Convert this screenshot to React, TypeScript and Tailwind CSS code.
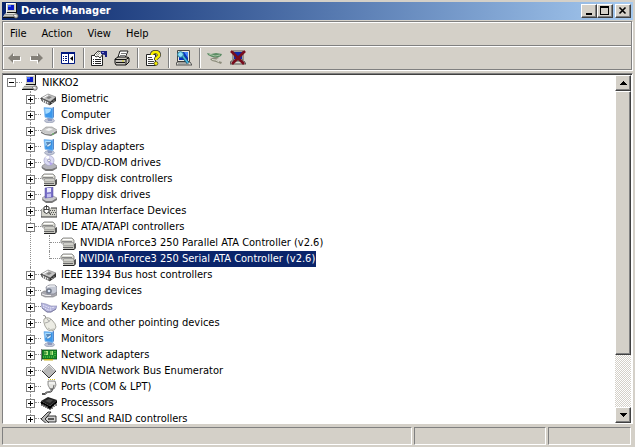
import type { ReactNode } from 'react';
import clsx from 'clsx';

interface IconProps {
  className?: string;
}

function Glyph({ className, children }: IconProps & { children: ReactNode }) {
  return (
    <svg viewBox="0 0 16 16" aria-hidden="true" className={clsx('size-4 shrink-0', className)}>
      {children}
    </svg>
  );
}

function PcIcon({ className }: IconProps) {
  return (
    <Glyph className={className}>
      <path d="M3 0h10v10H3z" fill="#d8d8d0" />
      <path d="M3 0h9v1H4v8H3z" fill="#fff" />
      <path d="M4 1h8v7H4z" fill="#c8c8c0" />
      <path d="M5 2h6v5H5z" fill="#0818c8" />
      <path d="M5 2h3v2H5z" fill="#4068ff" />
      <path d="M13 0h1v10H4V9h9z" fill="#111" />
      <path d="M3 10h10l1 2H1z" fill="#e8e8e0" />
      <path d="M1 12h12v2H0z" fill="#c8c8c0" />
      <path d="M2 11.500h9M1 13.500h9" stroke="#888" strokeWidth=".8" />
      <path d="M0 14h13v1H0z" fill="#111" />
      <circle cx="13" cy="13" r="2.200" fill="#d4d4d0" stroke="#444" strokeWidth=".8" />
      <path d="M11 12l2 1" stroke="#fff" />
    </Glyph>
  );
}

function ChipBoxIcon() {
  return (
    <Glyph>
      <path d="M0 7l7-4 8 3-6 5z" fill="#c4c4c4" stroke="#777" strokeWidth=".6" />
      <path d="M0 7l9 4v3L1 10z" fill="#888" stroke="#222" strokeWidth=".6" />
      <path d="M9 11l6-5v4l-6 4z" fill="#333" />
      <path d="M5 7l3-2 3 1-3 2z" fill="#808080" />
      <path d="M2 7l5-3" stroke="#fff" />
      <path d="M2.500 9v2M4.500 10v2M6.500 11v1.500M11 11v1M13 9.500v1" stroke="#eee" strokeWidth=".9" />
    </Glyph>
  );
}

function ScreenIcon({ tilted = false }: { tilted?: boolean }) {
  return (
    <Glyph>
      <ellipse cx="8.500" cy="13.700" rx="5" ry="2" fill="#c4c8d8" stroke="#8c94ac" strokeWidth=".6" />
      <path d="M6 10l5 1v3H7z" fill="#8c98bc" />
      <path d="M11 1l2-1v10l-2 2z" fill="#3468b8" />
      <path d="M3 0.500l9 .7v10.300l-8-1.200z" fill="#3c98ec" stroke="#8cbcec" strokeWidth=".8" />
      <path d="M4 1.500l6 .5q0 4-5.500 5z" fill="#a8dcff" />
      {tilted && <path d="M5 3h5v3H6z" fill="#5c88b8" />}
      {tilted && <path d="M5 7l5-3.500V6L7 8z" fill="#dcf0ff" stroke="#2868a8" strokeWidth=".5" />}
    </Glyph>
  );
}

function DiskIcon() {
  return (
    <Glyph>
      <path d="M0 8l5-4h6l5 3-5 4H4z" fill="#c8c8c8" stroke="#8a8a8a" strokeWidth=".6" />
      <path d="M0 8l4 2 6 1 6-4v3l-6 3-6-1-4-2z" fill="#777" />
      <path d="M0 8l4 2.500 6 .5 6-4" stroke="#eee" strokeWidth=".8" fill="none" />
      <path d="M4 7l4-2 4 1-4 2z" fill="#f4f4f4" />
      <path d="M11 11h2" stroke="#6c6" />
    </Glyph>
  );
}

function CdIcon() {
  return (
    <Glyph>
      <path d="M1 11l4-3h7l4 3v2l-5 3H5l-4-3z" fill="#b4b4bc" stroke="#777" strokeWidth=".6" />
      <path d="M1 12l4 2h6l5-2v1l-5 3H5l-4-3z" fill="#777" />
      <circle cx="8" cy="5.500" r="5" fill="#dcdcf4" stroke="#a4a4c8" strokeWidth=".7" />
      <path d="M8 5L4 2a5 5 0 014-1z" fill="#fff" />
      <path d="M8 6l4 3-3 1z" fill="#b4a4ec" />
      <circle cx="8" cy="5.500" r="1.400" fill="#fff" stroke="#7c7ca4" strokeWidth=".7" />
    </Glyph>
  );
}

function ControllerIcon() {
  return (
    <Glyph>
      <path d="M3 3h9l2 2v3H3L1 8V5z" fill="#dcdcd4" stroke="#777" strokeWidth=".8" />
      <path d="M3 4.500h9" stroke="#fff" />
      <path d="M2 6.500h10" stroke="#888" />
      <path d="M4 8h9l3 1v4l-2 2H5l-2-2V9z" fill="#c4c4bc" />
      <path d="M4 8h9l1 1v1H3V9z" fill="#f4f4ec" stroke="#777" strokeWidth=".6" />
      <path d="M14 9l2-1v5l-2 2z" fill="#555" />
      <path d="M3 12.500h10" stroke="#666" />
      <path d="M3 14.500h11" stroke="#222" />
    </Glyph>
  );
}

function FloppyIcon() {
  return (
    <Glyph>
      <path d="M1 11l3-2h8l4 2-5 4H5z" fill="#c8c8cc" stroke="#888" strokeWidth=".6" />
      <path d="M1 12l4 2h6l5-3v2l-5 3H5l-4-3z" fill="#777" />
      <path d="M4 1l8-1v10l-8 1z" fill="#7870c8" stroke="#5048a0" strokeWidth=".5" />
      <path d="M6 1h4v4l-4 .5z" fill="#e8e8fc" />
      <path d="M6 7l4-.5V10l-4 .5z" fill="#c4c0f0" />
    </Glyph>
  );
}

function HidIcon() {
  return (
    <Glyph>
      <path d="M1 5h14v9H1z" fill="#d4d4cc" />
      <path d="M0 6v8h16V5M10 5h6" fill="none" stroke="#333" />
      <path d="M9 7.500h6M10 9.500h5M9 11.500h6" stroke="#555" strokeDasharray="1 1" />
      <path d="M3 4q2.500-1.500 5 0v5q-2.500 3-5 0z" fill="#fff" stroke="#222" strokeWidth=".9" />
      <path d="M5.500 2v4M3 6.500h5" stroke="#222" strokeWidth=".8" />
      <path d="M8 9q1 3 2 2" stroke="#444" fill="none" />
    </Glyph>
  );
}

function CameraIcon() {
  return (
    <Glyph>
      <path d="M0 10l3-2h9l4 1v3l-4 2H4l-4-2z" fill="#a8a8b0" stroke="#777" strokeWidth=".6" />
      <path d="M5 4l3-2h6l2 2v5l-3 2H6z" fill="#c4c8d4" stroke="#7c7c88" strokeWidth=".7" />
      <path d="M6 4l3-1h5" stroke="#fff" fill="none" />
      <circle cx="8" cy="8" r="2.800" fill="#707888" />
      <circle cx="8" cy="8" r="1.300" fill="#dce8fc" />
      <path d="M1 11l4 1.500h5" stroke="#eee" fill="none" />
    </Glyph>
  );
}

function KeyboardIcon() {
  return (
    <Glyph>
      <path d="M0 4l5 1 5 2h6l-1 3-5 3H6L1 9z" fill="#b4b4dc" stroke="#8c8cb4" strokeWidth=".6" />
      <path d="M2 6l7 3 5-1M2 8l5 3h4" stroke="#ececfc" strokeDasharray="1.500 1" fill="none" />
      <path d="M1 9l5 4h4l5-3" stroke="#8080a4" fill="none" />
    </Glyph>
  );
}

function MouseIcon() {
  return (
    <Glyph>
      <path d="M2 0q3 0 3 4" stroke="#888" fill="none" />
      <path d="M3 4q4-3 8 1 4 4 4 7-1 4-5 4-4 0-6-5T3 4z" fill="#ecece4" stroke="#94948c" strokeWidth=".8" />
      <path d="M4 8q4 0 6-4M6 3.500l2 3" stroke="#999" strokeWidth=".8" fill="none" />
      <path d="M7 13q2 2.500 6 1" stroke="#bcbcb4" fill="none" />
    </Glyph>
  );
}

function NetworkIcon() {
  return (
    <Glyph>
      <path d="M1 3h15v9H1z" fill="#188828" stroke="#0c4c14" strokeWidth=".8" />
      <path d="M3 4h4v4H3zM9 4h3v4H9z" fill="#b4ec84" />
      <path d="M4 4v4M6 6H3M10 4v4" stroke="#0c6c18" strokeWidth=".8" />
      <path d="M2 10h12M14 4v5" stroke="#70d850" strokeDasharray="1 1" />
      <path d="M3 12h9v1.500H3z" fill="#c8b428" />
      <path d="M0 2h1v12H0z" fill="#777" />
    </Glyph>
  );
}

function DiamondIcon() {
  return (
    <Glyph>
      <path d="M8 1l7 7-7 7-7-7z" fill="#b8b8b8" />
      <path d="M1 8l7-7 7 7" fill="none" stroke="#999" strokeWidth=".8" />
      <path d="M2 8l6-6 5 5" fill="none" stroke="#e4e4e4" />
      <path d="M1 8l7 7 7-7" fill="none" stroke="#333" />
    </Glyph>
  );
}

function PortIcon() {
  return (
    <Glyph>
      <path d="M7 2h7l1 4-2 4H9L7 6z" fill="#e4e4e0" stroke="#777" strokeWidth=".8" />
      <path d="M7 .5h7" stroke="#d4c428" strokeDasharray="1 1" />
      <path d="M8 4h6" stroke="#fff" />
      <path d="M13 6l-1 4H9" fill="none" stroke="#666" />
      <path d="M11 10q0 3-3 3t-4 2H1" fill="none" stroke="#222" strokeWidth="1.600" />
      <path d="M11 10q0 3-3 3t-4 2" fill="none" stroke="#ccc" strokeWidth=".6" />
    </Glyph>
  );
}

function CpuIcon() {
  return (
    <Glyph>
      <path d="M0 6l7-4 9 3-7 6z" fill="#222" />
      <path d="M0 6l9 5 7-6v3l-7 6-9-5z" fill="#000" />
      <path d="M4 6l4-2 4 1-3 3z" fill="#484848" />
      <path d="M1 9v2M3 10v2M5 11v2M7 12v2M9 13v2M11 12v2M13 11v1M15 9v2" stroke="#000" />
      <path d="M2 9v2M4 10v2M6 11v2M12 11v2M14 9v2" stroke="#bbb" strokeWidth=".6" />
    </Glyph>
  );
}

function ScsiIcon() {
  return (
    <Glyph>
      <path d="M0 8l7-7h3L5 7l1 3 4 4H7z" fill="#b8b8b8" stroke="#222" strokeWidth=".9" />
      <path d="M4 8l3-3h8v6H7z" fill="#d0d0d0" stroke="#222" strokeWidth=".9" />
      <path d="M7 8h6" stroke="#222" strokeWidth="1.400" />
    </Glyph>
  );
}

function ArrowIcon({ className }: IconProps) {
  return (
    <Glyph className={className}>
      <path d="M3 9l5-5v3h7v4H8v3z" fill="#fff" />
      <path d="M2 8l5-5v3h7v4H7v3z" fill="#848078" />
    </Glyph>
  );
}

function PaneIcon() {
  return (
    <Glyph>
      <path d="M1.500 2.500h13v11h-13z" fill="#fff" stroke="#001880" />
      <path d="M1 2h14v2H1z" fill="#001880" />
      <path d="M8.500 3v10" stroke="#001880" />
      <path d="M3 6.500h1M5 6.500h2M3 8.500h1M5 8.500h2M3 10.500h1M5 10.500h2" stroke="#001880" />
      <path d="M13 6v5l-3-2.500z" fill="#000" />
    </Glyph>
  );
}

function PropertiesIcon() {
  return (
    <Glyph>
      <path d="M.5 5.500h11v10H.5z" fill="#fff" stroke="#222" />
      <path d="M2 9.500h1M4 9.500h6M2 11.500h1M4 11.500h6M2 13.500h1M4 13.500h6" stroke="#222" />
      <path d="M3 5l4-4 3 1 2 2-3 4-2-2-2 1z" fill="#f4f4ec" stroke="#222" strokeWidth=".9" />
      <path d="M5 5l3-3M7 5l2-2" stroke="#777" strokeWidth=".7" />
      <path d="M10 1h6v6h-2V5l-4-1z" fill="#182080" />
      <path d="M11 2h2v1h-2z" fill="#8c8ce0" />
    </Glyph>
  );
}

function PrintIcon() {
  return (
    <Glyph>
      <path d="M4 7l2-6h8l-3 7z" fill="#fff" stroke="#222" />
      <path d="M7 3.500h5M6 5.500h5" stroke="#555" strokeWidth=".8" />
      <path d="M1 9l3-2h9l2 1v4l-3 3H2l-1-2z" fill="#c8c4bc" stroke="#111" />
      <path d="M1 9.500h11l3-2M12 10v5" stroke="#111" fill="none" />
      <path d="M2 12.500h9" stroke="#111" />
      <path d="M8 11h2" stroke="#dcd818" />
    </Glyph>
  );
}

function HelpIcon() {
  return (
    <Glyph>
      <path d="M1.500 4.500h9v11h-9z" fill="#fff" stroke="#222" />
      <path d="M3 7.500h4M3 9.500h5M3 11.500h6M3 13.500h6" stroke="#444" />
      <path d="M7 5q0-3 3.500-3T14 5q0 1.500-1.600 2.300T11 10" fill="none" stroke="#333" strokeWidth="4" />
      <path d="M7 5q0-3 3.500-3T14 5q0 1.500-1.600 2.300T11 10" fill="none" stroke="#f8f000" strokeWidth="2.600" />
      <circle cx="11" cy="13.500" r="1.900" fill="#f8f000" stroke="#333" strokeWidth=".7" />
    </Glyph>
  );
}

function ScanIcon() {
  return (
    <Glyph>
      <path d="M1.500.500h12v11h-12z" fill="#e8e8e0" stroke="#444" />
      <path d="M3 2h9v8H3z" fill="#0830c0" />
      <path d="M8 2h4v6z" fill="#4c8cf8" />
      <path d="M1 12h13l2 3H0z" fill="#e4e4dc" stroke="#333" strokeWidth=".8" />
      <path d="M2 14h11" stroke="#777" />
      <path d="M6 5l6 8" stroke="#185878" strokeWidth="3" />
      <path d="M6 5l6 8" stroke="#48b8e0" strokeWidth="1.600" />
      <circle cx="4.500" cy="4.500" r="2.800" fill="#90e0f8" stroke="#2880a0" />
    </Glyph>
  );
}

function DisableIcon() {
  return (
    <Glyph>
      <path d="M0 3l4 1 5-1 6 1-1 2-4 2-5-1-4-2z" fill="#5c8c64" />
      <path d="M2 4l6 2 5-1" stroke="#a4c4a4" fill="none" />
      <path d="M8 7l-5 2 2 2 4 1 5 2 1-2-4-1-2-2 3-1z" fill="#8c8c7c" />
      <path d="M5 9.500l4 .5 3 2" stroke="#dcdcd0" fill="none" />
    </Glyph>
  );
}

function UninstallIcon() {
  return (
    <Glyph>
      <path d="M3 1h10v9H3z" fill="#e0e0d8" stroke="#333" strokeWidth=".8" />
      <path d="M4 2h8v7H4z" fill="#1028a8" />
      <path d="M1 11h13l2 3H0z" fill="#d8d8d0" stroke="#333" strokeWidth=".8" />
      <path d="M1 1l13 13M15 1L2 14" stroke="#780c1c" strokeWidth="2.600" />
    </Glyph>
  );
}

interface Device {
  name: string;
  icon: ReactNode;
  children?: string[];
}

const devices: Device[] = [
  { name: 'Biometric', icon: <ChipBoxIcon /> },
  { name: 'Computer', icon: <ScreenIcon /> },
  { name: 'Disk drives', icon: <DiskIcon /> },
  { name: 'Display adapters', icon: <ScreenIcon tilted /> },
  { name: 'DVD/CD-ROM drives', icon: <CdIcon /> },
  { name: 'Floppy disk controllers', icon: <ControllerIcon /> },
  { name: 'Floppy disk drives', icon: <FloppyIcon /> },
  { name: 'Human Interface Devices', icon: <HidIcon /> },
  {
    name: 'IDE ATA/ATAPI controllers',
    icon: <ControllerIcon />,
    children: [
      'NVIDIA nForce3 250 Parallel ATA Controller (v2.6)',
      'NVIDIA nForce3 250 Serial ATA Controller (v2.6)',
    ],
  },
  { name: 'IEEE 1394 Bus host controllers', icon: <ChipBoxIcon /> },
  { name: 'Imaging devices', icon: <CameraIcon /> },
  { name: 'Keyboards', icon: <KeyboardIcon /> },
  { name: 'Mice and other pointing devices', icon: <MouseIcon /> },
  { name: 'Monitors', icon: <ScreenIcon tilted /> },
  { name: 'Network adapters', icon: <NetworkIcon /> },
  { name: 'NVIDIA Network Bus Enumerator', icon: <DiamondIcon /> },
  { name: 'Ports (COM & LPT)', icon: <PortIcon /> },
  { name: 'Processors', icon: <CpuIcon /> },
  { name: 'SCSI and RAID controllers', icon: <ScsiIcon /> },
];

const selected = 'NVIDIA nForce3 250 Serial ATA Controller (v2.6)';

const raised =
  'flex shrink-0 items-center justify-center border border-t-white border-l-white border-r-[#404040] border-b-[#404040] bg-[#d4d0c8] shadow-[inset_-1px_-1px_0_#808080]';

function Expander({ open = false, label }: { open?: boolean; label: string }) {
  return (
    <button
      type="button"
      aria-label={`${open ? 'Collapse' : 'Expand'} ${label}`}
      aria-expanded={open}
      className="flex size-[9px] shrink-0 border border-[#808080] bg-white"
    >
      <svg viewBox="0 0 7 7" className="size-[7px]" shapeRendering="crispEdges" aria-hidden="true">
        <path d="M1 3h5v1H1z" />
        {!open && <path d="M3 1h1v5H3z" />}
      </svg>
    </button>
  );
}

function Dots({ className }: IconProps) {
  return <span className={clsx('shrink-0 border-t border-dotted border-[#909090]', className)} />;
}

function DeviceRow({ device }: { device: Device }) {
  const open = Boolean(device.children);
  return (
    <li className="flex">
      <div className="flex w-[9px] shrink-0 flex-col items-center">
        <span className="h-1 border-l border-dotted border-[#909090]" />
        <Expander open={open} label={device.name} />
        <span className="min-h-[3px] grow border-l border-dotted border-[#909090]" />
      </div>
      <div>
        <div className="flex h-4 items-center">
          <Dots className="w-1.5" />
          {device.icon}
          <span className="pl-1">{device.name}</span>
        </div>
        {device.children && (
          <ul className="pl-3.5">
            {device.children.map((name, i) => (
              <li key={name} className="flex h-4">
                <span
                  className={clsx(
                    'border-l border-dotted border-[#909090]',
                    i === device.children!.length - 1 ? 'h-2' : 'h-4',
                  )}
                />
                <div className="flex items-center">
                  <Dots className="w-2.5" />
                  <ControllerIcon />
                  <span className={clsx('ml-[3px] px-px py-px', name === selected && 'bg-[#0a246a] text-white')}>
                    {name}
                  </span>
                </div>
              </li>
            ))}
          </ul>
        )}
      </div>
    </li>
  );
}

function ToolButton({ label, disabled, children }: { label: string; disabled?: boolean; children: ReactNode }) {
  return (
    <button type="button" aria-label={label} disabled={disabled} className="flex h-[22px] w-[23px] items-center pl-[3px]">
      {children}
    </button>
  );
}

function Separator() {
  return <span className="mx-[3px] h-5 w-0.5 border-l border-[#808080] bg-white" />;
}

function TitleBar() {
  return (
    <header className="flex h-[18px] items-center bg-linear-to-r from-[#0a246a] to-[#a6caf0] pr-0.5 pl-px">
      <PcIcon />
      <h1 className="grow pl-0.5 text-[11px] font-bold text-white">Device Manager</h1>
      <div className="flex">
        <button type="button" aria-label="Minimize" className={clsx(raised, 'h-3.5 w-4')}>
          <svg viewBox="0 0 12 10" className="h-2.5 w-3" aria-hidden="true">
            <path d="M3 7h6v2H3z" />
          </svg>
        </button>
        <button type="button" aria-label="Maximize" className={clsx(raised, 'h-3.5 w-4')}>
          <svg viewBox="0 0 12 10" className="h-2.5 w-3" aria-hidden="true">
            <path d="M1 0h9v9H1zM2 2v6h7V2z" fillRule="evenodd" />
          </svg>
        </button>
        <button type="button" aria-label="Close" className={clsx(raised, 'ml-0.5 h-3.5 w-4')}>
          <svg viewBox="0 0 12 10" className="h-2.5 w-3" aria-hidden="true">
            <path d="M2.500 1.500l6 6M8.500 1.500l-6 6" stroke="#000" strokeWidth="1.600" />
          </svg>
        </button>
      </div>
    </header>
  );
}

function Toolbar() {
  return (
    <div role="toolbar" className="flex h-[22px] items-center">
      <ToolButton label="Back" disabled>
        <ArrowIcon />
      </ToolButton>
      <ToolButton label="Forward" disabled>
        <ArrowIcon className="-scale-x-100" />
      </ToolButton>
      <Separator />
      <ToolButton label="Show/Hide Console Tree">
        <PaneIcon />
      </ToolButton>
      <Separator />
      <ToolButton label="Properties">
        <PropertiesIcon />
      </ToolButton>
      <ToolButton label="Print">
        <PrintIcon />
      </ToolButton>
      <Separator />
      <ToolButton label="Help">
        <HelpIcon />
      </ToolButton>
      <Separator />
      <ToolButton label="Scan for hardware changes">
        <ScanIcon />
      </ToolButton>
      <Separator />
      <ToolButton label="Disable">
        <DisableIcon />
      </ToolButton>
      <ToolButton label="Uninstall">
        <UninstallIcon />
      </ToolButton>
    </div>
  );
}

function ScrollBar() {
  return (
    <div className="flex w-4 shrink-0 flex-col bg-[repeating-conic-gradient(#d4d0c8_0_25%,#fff_0_50%)] bg-[length:2px_2px]">
      <button type="button" aria-label="Scroll up" className={clsx(raised, 'size-4')}>
        <svg viewBox="0 0 8 4" className="h-1 w-2" shapeRendering="crispEdges" aria-hidden="true">
          <path d="M0 4l4-4 4 4z" />
        </svg>
      </button>
      <div className={clsx(raised, 'grow-[5] basis-0')} />
      <div className="grow basis-0" />
      <button type="button" aria-label="Scroll down" className={clsx(raised, 'size-4')}>
        <svg viewBox="0 0 8 4" className="h-1 w-2" shapeRendering="crispEdges" aria-hidden="true">
          <path d="M0 0h8L4 4z" />
        </svg>
      </button>
    </div>
  );
}

const statusCell = 'border border-t-[#808080] border-l-[#808080] border-r-white border-b-white';

export default function App() {
  return (
    <div className="flex h-screen flex-col bg-[#d4d0c8] px-0.5 pt-0.5 pb-0.5 font-['DejaVu_Sans_Condensed','DejaVu_Sans',sans-serif] text-[11px] leading-[14px] text-black">
      <TitleBar />
      <div className="mt-px mr-px border border-[#808080] shadow-[inset_1px_1px_0_#fff,1px_1px_0_#fff]">
        <nav className="flex h-6 items-center gap-[15px] border-b border-[#808080] pt-0.5 pl-[7px]">
          <button type="button">File</button>
          <button type="button">Action</button>
          <button type="button">View</button>
          <button type="button">Help</button>
        </nav>
        <div className="border-t border-white">
          <Toolbar />
        </div>
      </div>
      <main className="mt-[3px] flex min-h-0 grow border border-t-[#808080] border-l-[#808080] border-r-white border-b-white bg-white shadow-[inset_0_1px_0_#404040]">
        <div className="min-w-0 grow overflow-hidden pt-px pl-1 whitespace-nowrap">
          <div className="flex h-4 items-center">
            <Expander open label="NIKKO2" />
            <Dots className="w-1.5" />
            <PcIcon />
            <span className="pl-1">NIKKO2</span>
          </div>
          <ul className="pl-[19px]">
            {devices.map((device) => (
              <DeviceRow key={device.name} device={device} />
            ))}
          </ul>
        </div>
        <div className="flex pt-px pr-px">
          <ScrollBar />
        </div>
      </main>
      <footer className="mt-[3px] mr-0.5 flex h-[18px] shrink-0 gap-0.5">
        <div className={clsx(statusCell, 'grow')} />
        <div className={clsx(statusCell, 'w-[132px]')} />
        <div className={clsx(statusCell, 'w-[83px]')} />
      </footer>
    </div>
  );
}
